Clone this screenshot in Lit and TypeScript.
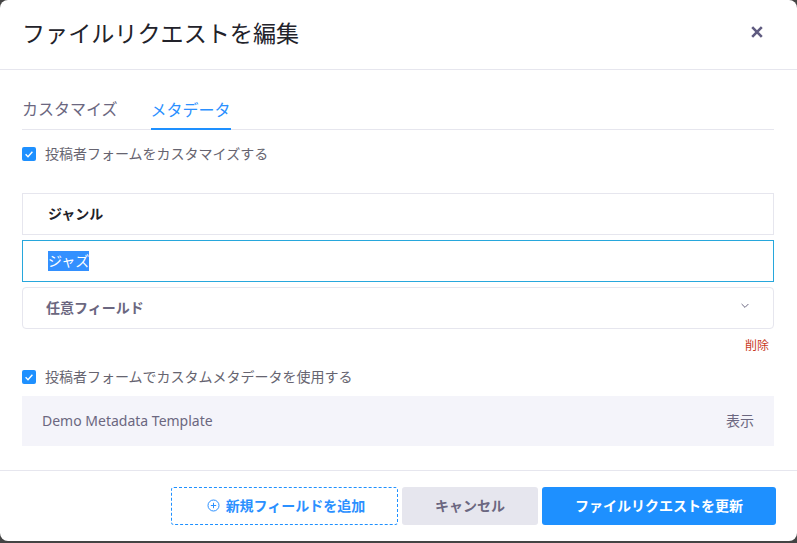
import { LitElement, css, html } from 'lit';
import { customElement } from 'lit/decorators.js';

const check = html`<svg class="check" viewBox="0 0 14 14" width="14" height="14"><path d="M3.6 7.3l2.4 2.4 4.4-5" fill="none" stroke="#fff" stroke-width="1.4"/></svg>`;

@customElement('app-root')
export class AppRoot extends LitElement {
  static styles = css`
    :host {
      display: block;
      width: 797px;
      height: 543px;
      background: #444;
      font-family: "Noto Sans", "Noto Sans CJK JP", sans-serif;
      color: #6b6780;
    }
    * { box-sizing: border-box; }
    .modal {
      height: 541px;
      background: #fff;
      border-radius: 8px;
      display: flex;
      flex-direction: column;
    }
    .header {
      height: 70px;
      padding: 0 22px 0 22px;
      border-bottom: 1px solid #e6e6ee;
      display: flex;
      align-items: center;
      justify-content: space-between;
    }
    h1 {
      margin: 0;
      font-size: 23.1px;
      font-weight: 400;
      color: #22222a;
      line-height: 32px;
      margin-top: -4px;
    }
    .close { margin-right: 11px; margin-top: -6px; display: block; }
    .body {
      flex: 1;
      padding: 0 23px 0 22px;
      display: flex;
      flex-direction: column;
    }
    .tabs {
      height: 60px;
      border-bottom: 1px solid #e6e6ee;
      display: flex;
      gap: 33px;
      align-items: flex-end;
    }
    .tab {
      font-size: 16px;
      line-height: 22px;
      height: 39px;
      padding-top: 8px;
      color: #6b6780;
    }
    .tab.active {
      color: #2b90ff;
      border-bottom: 2px solid #1e90ff;
      margin-bottom: -1px;
      width: 80px;
      text-align: center;
    }
    .opt {
      display: flex;
      align-items: center;
      gap: 9px;
      font-size: 14px;
      line-height: 20px;
      color: #666470;
    }
    .box {
      width: 14px;
      height: 14px;
      background: #1e90ff;
      border-radius: 2px;
      display: block;
      flex: none;
    }
    .check { display: block; }
    .first { margin-top: 14px; }
    .field {
      margin-top: 29px;
      height: 42px;
      border: 1px solid #e6e6ee;
      padding: 0 0 2px 25px;
      display: flex;
      align-items: center;
      font-size: 14px;
      font-weight: 700;
      color: #22222a;
    }
    .input {
      margin-top: 5px;
      height: 42px;
      border: 1px solid #27a7dc;
      padding-left: 25px;
      display: flex;
      align-items: center;
      font-size: 14px;
      color: #fff;
    }
    .input span { background: #3390ff; line-height: 20px; }
    .select {
      margin-top: 5px;
      height: 42px;
      border: 1px solid #e6e6ee;
      border-radius: 4px;
      padding: 0 24px 2px 23px;
      display: flex;
      align-items: center;
      justify-content: space-between;
      font-size: 14px;
      font-weight: 700;
      color: #6b6780;
    }
    .chevron { margin-top: -2px; display: block; }
    .delete {
      margin-top: 8px;
      height: 17px;
      text-align: right;
      padding-right: 5px;
      font-size: 12px;
      line-height: 17px;
      color: #c8381e;
    }
    .second { margin-top: 13px; }
    .template {
      margin-top: 9px;
      height: 50px;
      background: #f4f4fa;
      padding: 0 20px 2px;
      display: flex;
      align-items: center;
      justify-content: space-between;
      font-size: 14px;
      color: #6b6780;
    }
    .footer {
      height: 71px;
      border-top: 1px solid #e6e6ee;
      padding: 16px 21px 16px 0;
      display: flex;
      justify-content: flex-end;
      gap: 4px;
    }
    button {
      font: inherit;
      font-size: 14px;
      font-weight: 700;
      height: 38px;
      border-radius: 3px;
      border: none;
      padding: 0 0 2px;
      display: flex;
      align-items: center;
      justify-content: center;
    }
    .add {
      width: 227px;
      background: #fff;
      border: 1px dashed #1e90ff;
      color: #2b90ff;
      gap: 6px;
      padding-left: 3px;
    }
    .cancel { width: 136px; background: #e6e6ee; color: #6b6780; }
    .update { width: 234px; background: #1e90ff; color: #fff; }
  `;

  render() {
    return html`
      <div class="modal">
        <div class="header">
          <h1>ファイルリクエストを編集</h1>
          <svg class="close" viewBox="0 0 14 14" width="14" height="14"><path d="M2.2 2.2l9.6 9.6M11.8 2.2l-9.6 9.6" fill="none" stroke="#5f5b80" stroke-width="2.6"/></svg>
        </div>
        <div class="body">
          <div class="tabs">
            <div class="tab">カスタマイズ</div>
            <div class="tab active">メタデータ</div>
          </div>
          <div class="opt first"><span class="box">${check}</span>投稿者フォームをカスタマイズする</div>
          <div class="field">ジャンル</div>
          <div class="input"><span>ジャズ</span></div>
          <div class="select">
            <span>任意フィールド</span>
            <svg class="chevron" viewBox="0 0 8 6" width="8" height="6"><path d="M.6 1l3.4 3.4L7.4 1" fill="none" stroke="#6b6780" stroke-width="1"/></svg>
          </div>
          <div class="delete">削除</div>
          <div class="opt second"><span class="box">${check}</span>投稿者フォームでカスタムメタデータを使用する</div>
          <div class="template"><span>Demo Metadata Template</span><span>表示</span></div>
        </div>
        <div class="footer">
          <button class="add">
            <svg viewBox="0 0 13 13" width="13" height="13"><circle cx="6.5" cy="6.5" r="5.5" fill="none" stroke="#2b90ff" stroke-width="1"/><path d="M6.5 3.8v5.4M3.8 6.5h5.4" stroke="#2b90ff" stroke-width="1"/></svg>
            新規フィールドを追加
          </button>
          <button class="cancel">キャンセル</button>
          <button class="update">ファイルリクエストを更新</button>
        </div>
      </div>
    `;
  }
}
